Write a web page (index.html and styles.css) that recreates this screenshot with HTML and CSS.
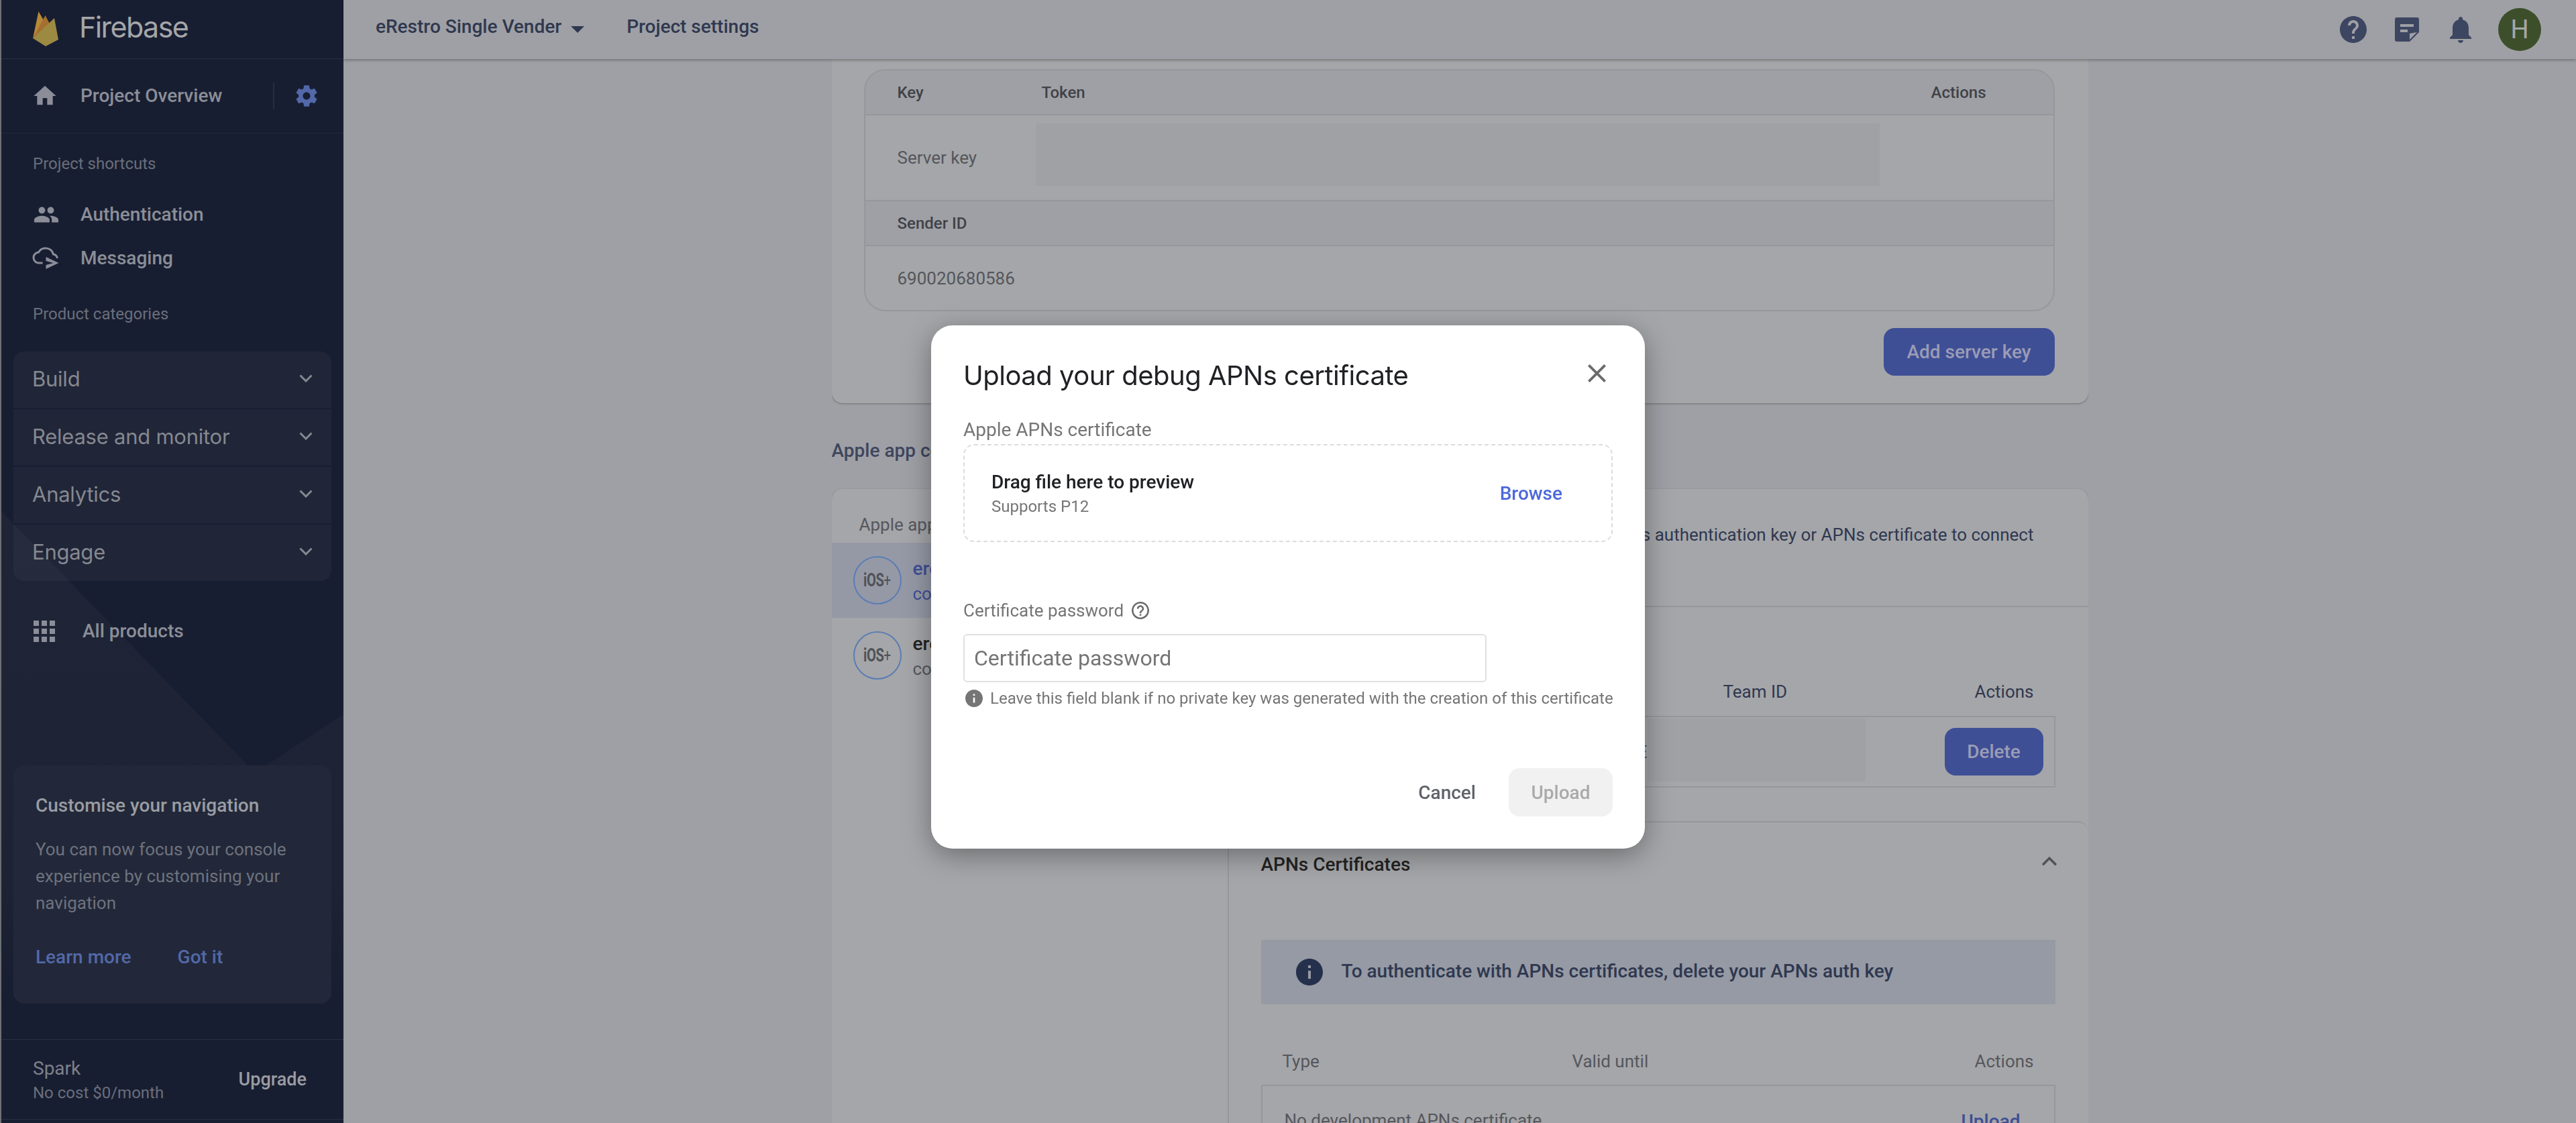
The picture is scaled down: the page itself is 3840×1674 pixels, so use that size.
FILE: index.html
```html
<!DOCTYPE html>
<html lang="en">
<head>
<meta charset="utf-8">
<title>Firebase - Project settings</title>
<link rel="stylesheet" href="styles.css">
</head>
<body>
<div class="app">
  <aside class="side">
    <svg class="side-art" viewBox="0 0 510 740" preserveAspectRatio="none" aria-hidden="true">
      <defs><linearGradient id="art" x1="0" y1="0" x2="0" y2="1"><stop offset="0" stop-color="#1f2536"/><stop offset=".75" stop-color="#1d2334"/><stop offset="1" stop-color="#181e31"/></linearGradient></defs>
      <polygon points="0,0 378,390 510,303 510,740 0,740" fill="url(#art)"/>
    </svg>
    <div class="brand">
      <svg class="logo" viewBox="0 0 38 52" aria-hidden="true">
        <path d="M0 40 L8.500 0 L17 15 Z" fill="#b58a37"/>
        <path d="M0 40 L18.500 6 L26 20 Z" fill="#a4702f"/>
        <path d="M0 40 L32 10 L38 42 L19 52 Z" fill="#9c8a43"/>
      </svg>
      <span class="brand-name">Firebase</span>
    </div>
    <div class="overview">
      <svg class="ic home" viewBox="0 0 24 24"><path d="M10 20v-6h4v6h5v-8h3L12 3 2 12h3v8z"/></svg>
      <span class="nav-text">Project Overview</span>
      <span class="vsep"></span>
      <svg class="ic gear" viewBox="0 0 24 24"><path d="M19.430 12.980c.040-.320.070-.640.070-.980s-.030-.660-.070-.980l2.110-1.650c.190-.150.240-.420.120-.640l-2-3.460c-.120-.220-.390-.300-.610-.220l-2.490 1c-.520-.400-1.080-.730-1.690-.980l-.380-2.650C14.460 2.180 14.250 2 14 2h-4c-.250 0-.460.180-.490.420l-.380 2.650c-.610.250-1.170.590-1.690.980l-2.490-1c-.230-.090-.490 0-.610.220l-2 3.460c-.130.220-.070.490.120.640l2.110 1.650c-.040.320-.070.650-.070.980s.030.660.070.980l-2.110 1.650c-.190.150-.240.420-.120.640l2 3.460c.120.220.390.300.610.220l2.490-1c.520.400 1.080.730 1.690.980l.380 2.650c.030.240.240.420.490.420h4c.250 0 .460-.180.490-.420l.380-2.650c.610-.250 1.170-.590 1.690-.980l2.490 1c.230.090.490 0 .610-.220l2-3.460c.120-.220.070-.490-.120-.640l-2.110-1.650zM12 15.500c-1.930 0-3.500-1.570-3.500-3.500s1.570-3.500 3.500-3.500 3.500 1.570 3.500 3.500-1.570 3.500-3.500 3.500z"/></svg>
    </div>
    <div class="side-label first">Project shortcuts</div>
    <div class="shortcut first">
      <svg class="ic people" viewBox="1 5 22 14"><path d="M16 11c1.660 0 2.990-1.340 2.990-3S17.660 5 16 5c-1.660 0-3 1.340-3 3s1.340 3 3 3zm-8 0c1.660 0 2.990-1.340 2.990-3S9.660 5 8 5C6.340 5 5 6.340 5 8s1.340 3 3 3zm0 2c-2.330 0-7 1.170-7 3.500V19h14v-2.500c0-2.330-4.670-3.500-7-3.500zm8 0c-.290 0-.620.020-.970.050 1.160.840 1.970 1.970 1.970 3.450V19h6v-2.500c0-2.330-4.670-3.500-7-3.500z"/></svg>
      <span class="nav-text">Authentication</span>
    </div>
    <div class="shortcut">
      <svg class="ic cloud" viewBox="0 0 39 33"><path class="cloud-line" d="M15 24H10a8 8 0 0 1-1-16A12 12 0 0 1 31 11a7.500 7.500 0 0 1 6 6"/><path d="M20 15l19 9-19 9v-6l11-3-11-3z"/></svg>
      <span class="nav-text">Messaging</span>
    </div>
    <div class="side-label second">Product categories</div>
    <div class="groups">
      <div class="group-row"><span>Build</span><svg class="chev" viewBox="0 0 20 12"><path d="M1.500 1.500 10 10l8.500-8.500"/></svg></div>
      <div class="group-row"><span>Release and monitor</span><svg class="chev" viewBox="0 0 20 12"><path d="M1.500 1.500 10 10l8.500-8.500"/></svg></div>
      <div class="group-row"><span>Analytics</span><svg class="chev" viewBox="0 0 20 12"><path d="M1.500 1.500 10 10l8.500-8.500"/></svg></div>
      <div class="group-row"><span>Engage</span><svg class="chev" viewBox="0 0 20 12"><path d="M1.500 1.500 10 10l8.500-8.500"/></svg></div>
    </div>
    <div class="all-products">
      <svg class="ic apps" viewBox="0 0 32 32"><path d="M0 0h8v8H0zM12 0h8v8h-8zM24 0h8v8h-8zM0 12h8v8H0zM12 12h8v8h-8zM24 12h8v8h-8zM0 24h8v8H0zM12 24h8v8h-8zM24 24h8v8h-8z"/></svg>
      <span class="nav-text">All products</span>
    </div>
    <div class="promo">
      <div class="promo-title">Customise your navigation</div>
      <p class="promo-body">You can now focus your console experience by customising your navigation</p>
      <div class="promo-links"><span>Learn more</span><span>Got it</span></div>
    </div>
    <div class="plan">
      <div class="plan-info"><div class="plan-name">Spark</div><div class="plan-cost">No cost $0/month</div></div>
      <span class="upgrade">Upgrade</span>
    </div>
  </aside>

  <div class="main">
    <header class="top">
      <span class="top-link">eRestro Single Vender</span>
      <span class="caret"></span>
      <span class="top-link settings">Project settings</span>
      <div class="top-icons">
        <svg class="top-ic help" viewBox="2 2 20 20"><path d="M12 2C6.480 2 2 6.480 2 12s4.480 10 10 10 10-4.480 10-10S17.520 2 12 2zm1 17h-2v-2h2v2zm2.070-7.750l-.900.920C13.450 12.900 13 13.500 13 15h-2v-.500c0-1.100.450-2.100 1.170-2.830l1.240-1.260c.370-.360.590-.860.590-1.410 0-1.100-.900-2-2-2s-2 .900-2 2H8c0-2.210 1.790-4 4-4s4 1.790 4 4c0 .880-.360 1.680-.930 2.250z"/></svg>
        <svg class="top-ic note" viewBox="0 0 36 36"><path fill-rule="evenodd" d="M3 0h30a3 3 0 0 1 3 3v19L22 36H3a3 3 0 0 1-3-3V3a3 3 0 0 1 3-3zM8 10v4h20v-4zM8 18v4h11v-4zM22 24v9l11-11z"/></svg>
        <svg class="top-ic bell" viewBox="4 2.500 16 19.500"><path d="M12 22c1.100 0 2-.900 2-2h-4c0 1.100.890 2 2 2zm6-6v-5c0-3.070-1.640-5.640-4.500-6.320V4c0-.830-.670-1.500-1.500-1.500s-1.500.670-1.500 1.500v.680C7.630 5.360 6 7.920 6 11v5l-2 2v1h16v-1l-2-2z"/></svg>
        <span class="avatar">H</span>
      </div>
    </header>

    <div class="content">
      <section class="card keys">
        <div class="key-table">
          <div class="kt-head"><span class="kt-key">Key</span><span class="kt-token">Token</span><span class="kt-actions">Actions</span></div>
          <div class="kt-row"><span class="kt-key">Server key</span><span class="redact"></span></div>
          <div class="kt-head"><span class="kt-key">Sender ID</span></div>
          <div class="kt-row last"><span class="kt-key">690020680586</span></div>
        </div>
        <div class="key-foot"><span class="btn wide">Add server key</span></div>
      </section>

      <h2 class="section-title">Apple app configuration</h2>

      <section class="card apps-card">
        <div class="app-list">
          <div class="app-list-title">Apple apps</div>
          <div class="app-row active">
            <span class="ios"><span class="ios-mark">iOS<i>+</i></span></span>
            <div class="app-meta"><div class="app-name">erestro</div><div class="app-id">com.erestro</div></div>
          </div>
          <div class="app-row">
            <span class="ios"><span class="ios-mark">iOS<i>+</i></span></span>
            <div class="app-meta"><div class="app-name">erestro</div><div class="app-id">com.erestro</div></div>
          </div>
        </div>
        <div class="app-detail">
          <div class="intro"><span>Upload this app's APNs authentication key or APNs certificate to connect</span></div>
          <div class="auth-key">
            <div class="ak-head"><span class="ak-team">Team ID</span><span class="ak-actions">Actions</span></div>
            <div class="ak-box">
              <span class="ak-name">E</span>
              <span class="redact ak-redact"></span>
              <span class="btn small">Delete</span>
            </div>
          </div>
          <div class="certs">
            <div class="certs-head">
              <span class="certs-title">APNs Certificates</span>
              <svg class="chev up" viewBox="0 0 20 12"><path d="M1.500 10.500 10 2l8.500 8.500"/></svg>
            </div>
            <div class="banner">
              <svg class="banner-ic" viewBox="2 2 20 20"><path d="M12 2C6.480 2 2 6.480 2 12s4.480 10 10 10 10-4.480 10-10S17.520 2 12 2zm1 15h-2v-6h2v6zm0-8h-2V7h2v2z"/></svg>
              <span class="banner-text">To authenticate with APNs certificates, delete your APNs auth key</span>
            </div>
            <div class="cert-head"><span class="ch-type">Type</span><span class="ch-valid">Valid until</span><span class="ch-actions">Actions</span></div>
            <div class="cert-row"><span>No development APNs certificate</span><span class="cert-upload">Upload</span></div>
          </div>
        </div>
      </section>
    </div>
  </div>
</div>

<div class="modal-layer">
  <div class="modal" role="dialog" aria-label="Upload your debug APNs certificate">
    <div class="modal-head">
      <h1 class="modal-title">Upload your debug APNs certificate</h1>
      <svg class="close" viewBox="5 5 14 14"><path d="M19 6.410L17.590 5 12 10.590 6.410 5 5 6.410 10.590 12 5 17.590 6.410 19 12 13.410 17.590 19 19 17.590 13.410 12z"/></svg>
    </div>
    <div class="field-label">Apple APNs certificate</div>
    <div class="drop">
      <div class="drop-text"><div class="drop-title">Drag file here to preview</div><div class="drop-sub">Supports P12</div></div>
      <span class="browse">Browse</span>
    </div>
    <div class="pw-label">Certificate password
      <svg class="pw-help" viewBox="2 2 20 20"><path d="M11 18h2v-2h-2v2zm1-16C6.480 2 2 6.480 2 12s4.480 10 10 10 10-4.480 10-10S17.520 2 12 2zm0 18c-4.410 0-8-3.590-8-8s3.590-8 8-8 8 3.590 8 8-3.590 8-8 8zm0-14c-2.210 0-4 1.790-4 4h2c0-1.100.900-2 2-2s2 .900 2 2c0 2-3 1.750-3 5h2c0-2.250 3-2.500 3-5 0-2.210-1.790-4-4-4z"/></svg>
    </div>
    <div class="pw-input">Certificate password</div>
    <div class="hint">
      <svg class="hint-ic" viewBox="2 2 20 20"><path d="M12 2C6.480 2 2 6.480 2 12s4.480 10 10 10 10-4.480 10-10S17.520 2 12 2zm1 15h-2v-6h2v6zm0-8h-2V7h2v2z"/></svg>
      <span>Leave this field blank if no private key was generated with the creation of this certificate</span>
    </div>
    <div class="modal-actions">
      <span class="cancel">Cancel</span>
      <span class="upload-btn">Upload</span>
    </div>
  </div>
</div>
</body>
</html>
```

FILE: styles.css
```css
* { box-sizing: border-box; }
html, body { margin: 0; height: 100%; overflow: hidden; }
body { font-family: Roboto, "Liberation Sans", sans-serif; background: #9fa0a5; color: #2f3850; }
.app { display: flex; height: 1674px; width: 3840px; }

/* Sidebar */
.side { position: relative; flex: none; width: 512px; border-left: 2px solid #6f7076; background: #181e31; display: flex; flex-direction: column; color: #8b8e98; overflow: hidden; }
.side > * { position: relative; }
.side > .side-art { position: absolute; left: 0; top: 762px; width: 510px; height: 740px; }
.brand { height: 88px; flex: none; border-bottom: 1px solid #2a3042; display: flex; align-items: center; padding-left: 47px; }
.logo { width: 38px; height: 52px; margin-top: -2px; }
.brand-name { margin: -7px 0 0 31px; font-family: Inter, Roboto, sans-serif; font-size: 43px; letter-spacing: -1.6px; color: #a5a6a9; font-weight: 400; line-height: 52px; }
.overview { height: 111px; flex: none; border-bottom: 1px solid #23293b; display: flex; align-items: center; padding-left: 47px; }
.ic { fill: currentColor; flex: none; display: block; }
.home { width: 40px; height: 40px; margin: 0 0 0 -2px; }
.nav-text { font-size: 28px; font-weight: 500; line-height: 36px; white-space: nowrap; }
.overview .nav-text { margin-left: 33px; }
.vsep { width: 2px; height: 40px; background: #272c3e; margin-left: 76px; }
.gear { width: 38px; height: 38px; color: #5368a8; margin-left: 29px; }
.side-label { font-size: 24px; line-height: 32px; color: #6a6e7b; padding-left: 47px; flex: none; }
.side-label.first { margin-top: 29px; }
.side-label.second { margin-top: 35px; }
.shortcut { height: 65px; flex: none; display: flex; align-items: center; padding-left: 47px; }
.shortcut.first { margin-top: 27px; }
.people { width: 36px; height: 24px; margin-left: 2px; margin-right: 33px; }
.cloud { width: 40px; height: 33px; margin-right: 32px; margin-left: -1px; }
.cloud-line { fill: none; stroke: currentColor; stroke-width: 3; }
.groups { margin: 40px 18px 0; flex: none; border-radius: 16px; overflow: hidden; display: flex; flex-direction: column; gap: 2px; }
.group-row { height: 84px; background: rgba(255,255,255,.035); display: flex; align-items: center; justify-content: space-between; padding: 0 28px 4px 28px; font-family: Inter, Roboto, sans-serif; font-size: 31px; letter-spacing: -.25px; color: #85888f; }
.chev { width: 20px; height: 12px; fill: none; stroke: currentColor; stroke-width: 3; display: block; }
.all-products { height: 60px; margin-top: 45px; flex: none; display: flex; align-items: center; padding-left: 48px; }
.apps { width: 32px; height: 32px; margin-right: 41px; }
.promo { margin: 170px 18px 0; height: 355px; flex: none; background: #222839; border-radius: 16px; padding: 42px 33px 0; }
.promo-title { font-size: 28px; font-weight: 500; line-height: 36px; color: #9a9ca3; }
.promo-body { margin: 27px 0 0; font-size: 26px; line-height: 40px; color: #6e727e; font-weight: 400; width: 400px; }
.promo-links { margin-top: 43px; font-size: 28px; font-weight: 500; line-height: 36px; color: #5368a8; display: flex; gap: 69px; }
.plan { margin-top: 53px; height: 120px; flex: none; border-top: 1px solid #2a3042; border-bottom: 1px solid #2a3042; display: flex; align-items: center; justify-content: space-between; padding: 0 55px 0 47px; }
.plan-info { padding-top: 2px; }
.plan-name { font-size: 28px; line-height: 36px; color: #7e818b; }
.plan-cost { font-size: 24px; line-height: 32px; margin-top: 2px; color: #6a6e7b; }
.upgrade { font-size: 27px; font-weight: 500; color: #9a9ca3; }

/* Main */
.main { flex: 1; min-width: 0; display: flex; flex-direction: column; background: #9fa0a5; }
.top { height: 88px; flex: none; position: relative; z-index: 2; display: flex; align-items: center; padding-left: 48px; background: #9fa0a5; box-shadow: 0 2px 4px rgba(0,0,0,.28); }
.top-link { font-size: 28px; font-weight: 500; line-height: 36px; color: #2f3850; white-space: nowrap; margin-bottom: 8px; }
.caret { width: 0; height: 0; margin-left: 14px; border: 10px solid transparent; border-top-color: #2f3850; border-bottom: 0; }
.settings { margin-left: 63px; }
.top-icons { margin-left: auto; display: flex; align-items: center; padding-right: 52px; }
.top-ic { fill: #3d4661; display: block; flex: none; }
.help { width: 40px; height: 40px; }
.note { width: 36px; height: 36px; margin-left: 42px; }
.bell { width: 32px; height: 39px; margin-left: 46px; }
.avatar { width: 64px; height: 64px; margin-left: 40px; border-radius: 50%; background: #3c4f2a; color: #a6a7a9; font-size: 38px; display: flex; align-items: center; justify-content: center; }
.content { flex: 1; min-height: 0; overflow: hidden; width: 1873px; margin: 0 auto; }
.card { background: #a5a6a9; border-radius: 16px; box-shadow: 0 1px 3px rgba(0,0,0,.3); }
.keys { height: 513px; padding: 15px 50px 0 48px; border-radius: 0 0 16px 16px; }
.key-table { height: 361px; border: 2px solid #96979c; border-radius: 32px; overflow: hidden; }
.kt-head { height: 65px; background: #9fa0a5; display: flex; align-items: center; font-size: 24px; font-weight: 500; color: #404248; position: relative; }
.kt-row { height: 130px; border-top: 2px solid #96979c; border-bottom: 2px solid #96979c; display: flex; align-items: center; font-size: 26px; color: #54565c; }
.kt-row.last { height: 97px; border-bottom: 0; }
.kt-key { margin-left: 48px; width: 215px; flex: none; }
.kt-token { flex: 1; }
.kt-actions { margin-right: 100px; }
.redact { display: block; background: #a0a1a5; }
.kt-row .redact { width: 1258px; height: 93px; margin-left: -9px; margin-top: -10px; }
.key-foot { margin-top: 25px; display: flex; justify-content: flex-end; }
.btn { display: flex; align-items: center; justify-content: center; height: 71px; border-radius: 16px; background: #3f4f96; color: #9a9cb5; font-size: 28px; font-weight: 500; }
.btn.wide { width: 255px; }
.section-title { margin: 53px 0 39px; font-size: 28px; font-weight: 500; line-height: 36px; color: #3e465e; white-space: nowrap; }
.apps-card { display: flex; height: 1000px; }
.app-list { flex: none; width: 592px; border-right: 2px solid #96979c; padding-top: 35px; }
.app-list-title { padding-left: 41px; font-size: 26px; line-height: 36px; color: #55575d; }
.app-row { height: 112px; display: flex; align-items: center; padding-left: 32px; gap: 17px; }
.app-list-title + .app-row { margin-top: 9px; }
.app-row.active { background: #9599a6; }
.ios { width: 72px; height: 72px; flex: none; border-radius: 50%; border: 2px solid #5a7db4; display: flex; align-items: center; justify-content: center; }
.ios-mark { display: block; font-size: 28px; line-height: 32px; font-weight: 700; letter-spacing: -.5px; color: #505258; white-space: nowrap; transform: scaleX(.72); }
.ios-mark i { font-style: normal; font-weight: 400; font-size: 26px; }
.app-meta { width: 60px; overflow: hidden; white-space: nowrap; padding-top: 2px; }
.app-name { font-size: 28px; font-weight: 500; line-height: 38px; color: #222; }
.app-id { font-size: 26px; line-height: 36px; color: #55575d; }
.active .app-name, .active .app-id { color: #3f4f96; }
.app-detail { flex: 1; min-width: 0; display: flex; flex-direction: column; }
.intro { height: 176px; flex: none; display: flex; justify-content: flex-end; padding: 50px 81px 0 0; border-bottom: 2px solid #96979c; font-size: 26px; line-height: 36px; color: #2f3850; white-space: nowrap; }
.auth-key { height: 319px; flex: none; padding: 106px 49px 0 48px; }
.ak-head { height: 40px; display: flex; align-items: center; font-size: 26px; color: #2f3850; }
.ak-team { margin-left: 689px; }
.ak-actions { margin-left: auto; margin-right: 32px; }
.ak-box { margin-top: 16px; height: 107px; border: 2px solid #96979c; display: flex; align-items: center; font-size: 26px; color: #55575d; }
.ak-name { flex: 0 0 574px; text-align: right; }
.ak-redact { width: 325px; height: 94px; margin-top: -6px; }
.btn.small { width: 147px; margin-left: 118px; }
.certs { flex: 1; border-top: 2px solid #96979c; border-radius: 16px 16px 0 0; padding: 0 49px 0 48px; }
.certs-head { height: 175px; display: flex; justify-content: space-between; padding-top: 45px; }
.certs-title { font-size: 28px; font-weight: 500; line-height: 36px; color: #222; }
.chev.up { width: 24px; height: 14px; margin: 6px -3px 0 0; color: #505258; }
.banner { height: 96px; background: #969aa4; display: flex; align-items: center; padding-left: 52px; gap: 28px; font-size: 28px; font-weight: 500; color: #2f3850; }
.banner-text { margin-bottom: 4px; }
.banner-ic { width: 40px; height: 40px; fill: #25304d; flex: none; }
.cert-head { height: 120px; display: flex; align-items: flex-end; padding-bottom: 17px; font-size: 26px; color: #55575d; line-height: 36px; }
.ch-type { margin-left: 32px; width: 432px; }
.ch-actions { margin-left: auto; margin-right: 32px; }
.cert-row { border: 2px solid #96979c; height: 120px; display: flex; justify-content: space-between; padding: 36px 50px 0 33px; font-size: 26px; color: #55575d; }
.cert-upload { color: #3f4f96; font-weight: 500; font-size: 28px; }

/* Modal */
.modal-layer { position: fixed; inset: 0; z-index: 10; display: flex; justify-content: center; align-items: flex-start; padding-top: 485px; }
.modal { width: 1064px; height: 780px; background: #fff; border-radius: 32px; padding: 0 48px; box-shadow: 0 10px 40px rgba(0,0,0,.35); color: #222; }
.modal-head { height: 140px; display: flex; justify-content: space-between; align-items: flex-start; padding-top: 49px; }
.modal-title { margin: 0; font-family: Inter, Roboto, sans-serif; font-size: 40px; font-weight: 400; letter-spacing: -.5px; line-height: 52px; color: #202124; white-space: nowrap; }
.close { width: 27px; height: 27px; fill: #6b6b6b; margin: 9px 10px 0 0; display: block; }
.field-label { margin-top: -2px; font-size: 28px; line-height: 36px; color: #757575; }
.drop { margin-top: 3px; height: 146px; border: 2px dashed #dcdcdc; border-radius: 16px; display: flex; align-items: center; justify-content: space-between; padding: 0 73px 0 40px; }
.drop-text { padding-top: 3px; }
.drop-title { font-size: 28px; font-weight: 500; line-height: 36px; color: #202124; }
.drop-sub { margin-top: 0; font-size: 24px; line-height: 36px; color: #757575; }
.browse { font-size: 28px; font-weight: 500; color: #4c68dc; }
.pw-label { margin-top: 84px; display: flex; align-items: center; gap: 12px; font-size: 26px; line-height: 36px; color: #757575; }
.pw-help { width: 26px; height: 26px; fill: #6b6b6b; flex: none; }
.pw-input { margin-top: 17px; width: 780px; height: 72px; border: 2px solid #e0e0e0; border-radius: 6px; display: flex; align-items: center; padding-left: 14px; font-size: 32px; color: #757575; }
.hint { margin-top: 8px; height: 32px; display: flex; align-items: center; gap: 11px; padding-left: 3px; font-size: 24px; color: #757575; white-space: nowrap; }
.hint-ic { width: 26px; height: 26px; fill: #757575; flex: none; }
.modal-actions { margin-top: 88px; display: flex; justify-content: flex-end; align-items: center; gap: 49px; }
.cancel { font-size: 28px; font-weight: 500; color: #5f6368; }
.upload-btn { width: 155px; height: 72px; border-radius: 16px; background: #f1f1f1; color: #aaa; font-size: 28px; font-weight: 500; display: flex; align-items: center; justify-content: center; }
```
